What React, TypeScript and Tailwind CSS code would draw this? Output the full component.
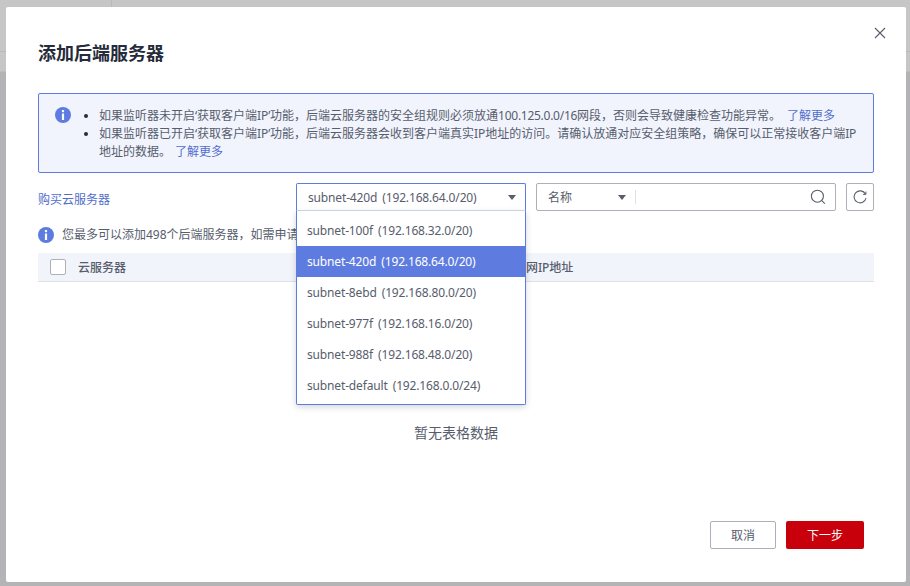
import { useState } from "react";
import type { ReactNode } from "react";

const subnets = [
  { name: "subnet-100f", cidr: "192.168.32.0/20" },
  { name: "subnet-420d", cidr: "192.168.64.0/20" },
  { name: "subnet-8ebd", cidr: "192.168.80.0/20" },
  { name: "subnet-977f", cidr: "192.168.16.0/20" },
  { name: "subnet-988f", cidr: "192.168.48.0/20" },
  { name: "subnet-default", cidr: "192.168.0.0/24" },
];

function InfoIcon({ className }: { className: string }) {
  return (
    <svg viewBox="0 0 16 16" className={className}>
      <circle cx="8" cy="8" r="8" fill="#5e7ce0" />
      <rect x="6.9" y="2.9" width="2.2" height="2.3" rx="0.6" fill="#fff" />
      <rect x="6.9" y="6.4" width="2.2" height="6.7" rx="0.4" fill="#fff" />
    </svg>
  );
}

function Caret() {
  return (
    <svg viewBox="0 0 8 5" className="h-[5px] w-2">
      <path d="M0 0h8L4 5z" fill="#575d6c" />
    </svg>
  );
}

// latin runs sit a little tighter than the CJK around them
function Lat({ children }: { children: ReactNode }) {
  return <span className="tracking-[-0.15px]">{children}</span>;
}

function SubnetLabel({ name, cidr }: { name: string; cidr: string }) {
  return (
    <span className="flex gap-[5px]">
      <Lat>{name}</Lat>
      <Lat>({cidr})</Lat>
    </span>
  );
}

export default function App() {
  const [current] = useState(subnets[1]);

  return (
    <div
      className="relative h-[586px] w-[910px] overflow-hidden bg-[#b4b4b6] text-xs text-[#575d6c]"
      style={{ fontFamily: '"Noto Sans", "Noto Sans CJK SC", sans-serif' }}
    >
      {/* page behind the dialog */}
      <div className="h-[72px] border-b border-[#bdbdbd] bg-[#c6c6c6]">
        <div className="h-[52px] border-b border-[#bababa]">
          <div className="h-full w-[112px] border-r border-[#b9b9b9]" />
        </div>
      </div>

      <div className="absolute left-[6px] top-[7px] flex h-[575px] w-[900px] flex-col rounded-[2px] bg-white px-8">
        <button className="absolute right-[20px] top-[20px]">
          <svg viewBox="0 0 12 12" className="h-3 w-3" fill="none" stroke="#575d6c" strokeWidth="1.1">
            <path d="M1 1l10 10M11 1L1 11" />
          </svg>
        </button>

        <h2 className="mt-[33px] h-[26px] text-lg font-bold leading-[26px] text-[#252b3a]">添加后端服务器</h2>

        <div className="mt-[27px] flex h-[80px] w-[836px] rounded-[2px] border border-[#5e7ce0] bg-[#f1f4fd] pl-4 pt-[13px]">
          <InfoIcon className="h-4 w-4 shrink-0" />
          <ul className="ml-[13px] w-[776px] list-none leading-[18px]">
            <li className="relative pl-[15px] before:absolute before:left-0 before:top-[7px] before:h-[4px] before:w-[4px] before:rounded-full before:bg-[#252b3a]">
              如果监听器未开启‘获取客户端<Lat>IP’</Lat>功能，后端云服务器的安全组规则必须放通
              <span className="tracking-[-0.27px]">100.125.0.0/16</span>网段，否则会导致健康检查功能异常。
              <a className="ml-[6px] text-[#526ecc]">了解更多</a>
            </li>
            <li className="relative pl-[15px] before:absolute before:left-0 before:top-[7px] before:h-[4px] before:w-[4px] before:rounded-full before:bg-[#252b3a]">
              如果监听器已开启‘获取客户端<Lat>IP’</Lat>功能，后端云服务器会收到客户端真实<Lat>IP</Lat>
              地址的访问。请确认放通对应安全组策略，确保可以正常接收客户端<Lat>IP</Lat>地址的数据。
              <a className="ml-1 text-[#526ecc]">了解更多</a>
            </li>
          </ul>
        </div>

        <div className="relative mt-[10px] flex h-[28px] items-center">
          <a className="w-[258px] pt-[5px] text-[#526ecc]">购买云服务器</a>

          <div className="relative w-[230px]">
            <div className="flex h-[28px] items-center justify-between rounded-t-[2px] border border-[#5e7ce0] border-b-[#d5d9e6] pl-[11px] pr-[9px]">
              <span className="pt-[2px]">
                <SubnetLabel name={current.name} cidr={current.cidr} />
              </span>
              <Caret />
            </div>
            <ul className="absolute left-0 top-[28px] z-10 h-[194px] w-[230px] rounded-b-[2px] border border-t-0 border-[#5e7ce0] bg-white py-1 shadow-[0_2px_6px_rgba(37,43,58,0.2)]">
              {subnets.map((s) =>
                s.name === current.name ? (
                  <li key={s.name} className="flex h-[31px] items-center bg-[#5e7ce0] pl-[10px] text-white">
                    <SubnetLabel name={s.name} cidr={s.cidr} />
                  </li>
                ) : (
                  <li key={s.name} className="flex h-[31px] items-center pl-[10px]">
                    <SubnetLabel name={s.name} cidr={s.cidr} />
                  </li>
                ),
              )}
            </ul>
          </div>

          <div className="ml-[10px] flex h-[28px] w-[300px] items-center rounded-[2px] border border-[#adb0b8]">
            <span className="w-[81px] pl-[11px] pt-[2px]">名称</span>
            <Caret />
            <span className="ml-[9px] h-[14px] w-px bg-[#dfe1e6]" />
            <svg viewBox="0 0 16 16" className="ml-auto mr-[9px] h-4 w-4" fill="none" stroke="#575d6c" strokeWidth="1.1">
              <circle cx="7.4" cy="7.2" r="6" />
              <path d="M11.8 11.6l3 3" />
            </svg>
          </div>

          <button className="ml-[10px] flex h-[28px] w-[28px] items-center justify-center rounded-[2px] border border-[#adb0b8]">
            <svg viewBox="0 0 14 14" className="h-[14px] w-[14px]" fill="none" stroke="#575d6c" strokeWidth="1.1">
              <path d="M12.4 4A6 6 0 1 0 13 8" />
              <path d="M12.9 1.6v2.8H10.1" strokeWidth="1" />
            </svg>
          </button>
        </div>

        <div className="mt-[14px] flex h-[20px] items-center gap-2">
          <InfoIcon className="h-4 w-4 shrink-0" />
          <span className="whitespace-nowrap">您最多可以添加498个后端服务器，如需申请</span>
        </div>

        <div className="mt-[8px] flex h-[29px] w-[836px] items-center border-b border-[#dfe1e6] bg-[#f1f4fb] font-medium">
          <span className="ml-3 h-4 w-4 rounded-[2px] border border-[#adb0b8] bg-white" />
          <span className="ml-[12px] w-[436px] pt-[2px]">云服务器</span>
          <span className="pt-[2px]">
            内网<Lat>IP</Lat>地址
          </span>
        </div>

        <div className="mt-[142px] h-[18px] text-center text-sm leading-[18px]">暂无表格数据</div>

        <div className="mt-auto mb-[33px] flex justify-end gap-[10px] pr-[10px]">
          <button className="h-[28px] w-[66px] rounded-[2px] border border-[#adb0b8] bg-white pt-px">取消</button>
          <button className="h-[28px] w-[78px] rounded-[2px] bg-[#c7000b] pt-px text-white">下一步</button>
        </div>
      </div>
    </div>
  );
}
